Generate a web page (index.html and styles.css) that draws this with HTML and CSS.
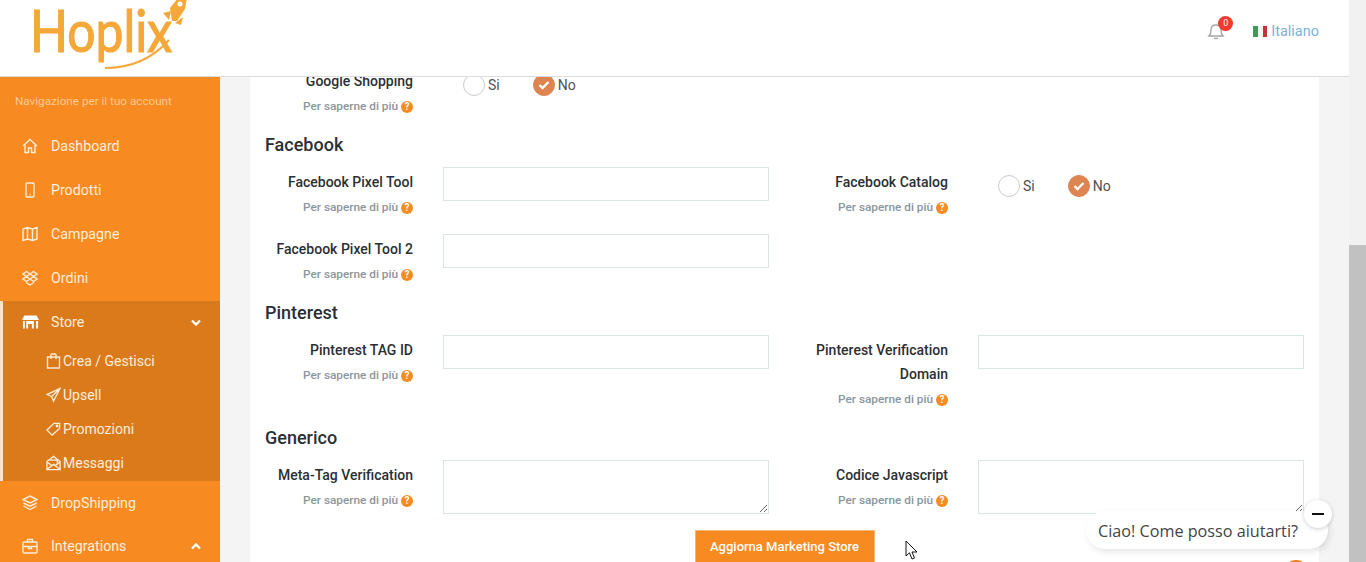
FILE: index.html
```html
<!DOCTYPE html>
<html lang="it">
<head>
  <meta charset="UTF-8">
  <meta name="viewport" content="width=device-width, initial-scale=1.0">
  <title>Hoplix - Marketing Store</title>
  <link rel="stylesheet" href="styles.css">
</head>
<body>
  <div class="page">
    <header class="topbar">
      <svg class="logo" width="158" height="76" viewBox="0 0 158 76">
        <text class="logo-text" x="-3" y="52" textLength="142" lengthAdjust="spacingAndGlyphs">Hoplix</text>
        <path d="M72 68 C98 68 120 58 136 40" fill="none" stroke="#f5a83a" stroke-width="2"/>
        <path d="M137 8 L145 -2 H154 L152 9 L144 21 L139 21 Z" fill="#f5a83a"/>
        <circle cx="147" cy="4" r="2.5" fill="#fff"/>
        <path d="M130 13 L138 11 L136 20 Z M142 23 L150 17 L148 25 Z" fill="#f5a83a"/>
      </svg>
      <div class="topbar-right">
        <div class="bell">
          <svg width="18" height="18" viewBox="0 0 18 18" fill="none" stroke="#a5a5a5" stroke-width="1.4">
            <path d="M2 14 Q4 12 4 8 Q4 3 9 3 Q14 3 14 8 Q14 12 16 14 Z"/>
            <path d="M7 16.5 H11"/>
          </svg>
          <span class="badge">0</span>
        </div>
        <div class="lang">
          <span class="flag"><i class="green"></i><i class="white"></i><i class="red"></i></span>
          Italiano
        </div>
      </div>
    </header>

    <div class="layout">
      <nav class="sidebar">
        <div class="nav-title">Navigazione per il tuo account</div>
        <a class="nav-item">
          <svg class="nav-icon" viewBox="0 0 16 16"><path d="M1 8 L8 1.5 L15 8 M3 7 V14.5 H6.5 V10 H9.5 V14.5 H13 V7"/></svg>
          Dashboard
        </a>
        <a class="nav-item">
          <svg class="nav-icon" viewBox="0 0 16 16"><rect x="4" y="1" width="8" height="14" rx="1"/><path d="M7.5 12.8 H8.5"/></svg>
          Prodotti
        </a>
        <a class="nav-item">
          <svg class="nav-icon" viewBox="0 0 16 16"><path d="M1 3 L5.5 1.5 L10.5 3 L15 1.5 V13 L10.5 14.5 L5.5 13 L1 14.5 Z M5.5 1.5 V13 M10.5 3 V14.5"/></svg>
          Campagne
        </a>
        <a class="nav-item">
          <svg class="nav-icon" viewBox="0 0 16 16"><path d="M4.5 1.5 L8 4 L11.5 1.5 L15 4 L11.5 6.5 L15 9 L11.5 11.5 L8 9 L4.5 11.5 L1 9 L4.5 6.5 L1 4 Z M4.5 6.5 L8 4 L11.5 6.5 L8 9 Z M4 12.5 L8 15 L12 12.5"/></svg>
          Ordini
        </a>
        <div class="nav-group">
          <a class="nav-item">
            <svg class="nav-icon solid" viewBox="0 0 18 16"><path d="M2.5 1 H15.5 L18 6 H0 Z M1 7 H3 V15 H1 Z M15 7 H17 V15 H15 Z M4.5 7 H12.5 V15 H10.5 V10 H6.5 V15 H4.5 Z"/></svg>
            Store
            <svg class="chevron" viewBox="0 0 10 7"><path d="M1 1.5 L5 5.5 L9 1.5"/></svg>
          </a>
          <a class="sub-item">
            <svg class="sub-icon" viewBox="0 0 14 16"><rect x="1" y="4" width="12" height="11"/><path d="M4.5 6 V2 Q4.5 1 5.5 1 H8.5 Q9.5 1 9.5 2 V6"/></svg>
            Crea / Gestisci
          </a>
          <a class="sub-item">
            <svg class="sub-icon" viewBox="0 0 16 16"><path d="M15 1 L1 7.5 L6 9.5 L8 14.5 Z M15 1 L6 9.5"/></svg>
            Upsell
          </a>
          <a class="sub-item">
            <svg class="sub-icon" viewBox="0 0 16 16"><path d="M1 9 L8.5 2 H14.5 V7.5 L6.5 14.5 Z"/><circle cx="11.8" cy="4.8" r="0.8"/></svg>
            Promozioni
          </a>
          <a class="sub-item">
            <svg class="sub-icon" viewBox="0 0 16 16"><path d="M1 6.5 L8 1 L15 6.5 V15 H1 Z M1 7 L6 10.5 M15 7 L10 10.5 M1.5 14.5 L8 9.5 L14.5 14.5 M4 5 H12 V9"/></svg>
            Messaggi
          </a>
        </div>
        <a class="nav-item">
          <svg class="nav-icon" viewBox="0 0 16 16"><path d="M8 1 L15 4.5 L8 8 L1 4.5 Z M1.5 8 L8 11.2 L14.5 8 M1.5 11 L8 14.5 L14.5 11"/></svg>
          DropShipping
        </a>
        <a class="nav-item">
          <svg class="nav-icon" viewBox="0 0 16 16"><rect x="1" y="4" width="14" height="11" rx="1"/><path d="M5.5 4 V1.5 H10.5 V4 M1 8.5 H15 M6.5 8.5 V10.5 H9.5 V8.5"/></svg>
          Integrations
          <svg class="chevron" viewBox="0 0 10 7"><path d="M1 5.5 L5 1.5 L9 5.5"/></svg>
        </a>
      </nav>

      <main class="main">
        <div class="card">
          <div class="row row-first">
            <div class="field">
              <div class="label">
                <div class="label-name">Google Shopping</div>
                <div class="label-help">Per saperne di più <span class="help">?</span></div>
              </div>
              <div class="radios">
                <span class="radio"><i class="circle"></i>Si</span>
                <span class="radio"><i class="circle checked"><svg viewBox="0 0 12 10"><path d="M1.5 5 L4.5 8 L10.5 2"/></svg></i>No</span>
              </div>
            </div>
          </div>

          <h3 class="section-title">Facebook</h3>
          <div class="row">
            <div class="field">
              <div class="label">
                <div class="label-name">Facebook Pixel Tool</div>
                <div class="label-help">Per saperne di più <span class="help">?</span></div>
              </div>
              <input class="text-input" type="text">
            </div>
            <div class="field">
              <div class="label">
                <div class="label-name">Facebook Catalog</div>
                <div class="label-help">Per saperne di più <span class="help">?</span></div>
              </div>
              <div class="radios">
                <span class="radio"><i class="circle"></i>Si</span>
                <span class="radio"><i class="circle checked"><svg viewBox="0 0 12 10"><path d="M1.5 5 L4.5 8 L10.5 2"/></svg></i>No</span>
              </div>
            </div>
          </div>
          <div class="row">
            <div class="field">
              <div class="label">
                <div class="label-name">Facebook Pixel Tool 2</div>
                <div class="label-help">Per saperne di più <span class="help">?</span></div>
              </div>
              <input class="text-input" type="text">
            </div>
          </div>

          <h3 class="section-title">Pinterest</h3>
          <div class="row">
            <div class="field">
              <div class="label">
                <div class="label-name">Pinterest TAG ID</div>
                <div class="label-help">Per saperne di più <span class="help">?</span></div>
              </div>
              <input class="text-input" type="text">
            </div>
            <div class="field">
              <div class="label">
                <div class="label-name">Pinterest Verification Domain</div>
                <div class="label-help">Per saperne di più <span class="help">?</span></div>
              </div>
              <input class="text-input" type="text">
            </div>
          </div>

          <h3 class="section-title">Generico</h3>
          <div class="row">
            <div class="field">
              <div class="label">
                <div class="label-name">Meta-Tag Verification</div>
                <div class="label-help">Per saperne di più <span class="help">?</span></div>
              </div>
              <textarea class="text-area"></textarea>
            </div>
            <div class="field">
              <div class="label">
                <div class="label-name">Codice Javascript</div>
                <div class="label-help">Per saperne di più <span class="help">?</span></div>
              </div>
              <textarea class="text-area"></textarea>
            </div>
          </div>

          <div class="actions">
            <button class="submit" type="button">Aggiorna Marketing Store</button>
          </div>
        </div>
      </main>
    </div>
  </div>

  <div class="scrollbar"><div class="scroll-thumb"></div></div>

  <svg class="cursor" width="14" height="21" viewBox="0 0 14 21">
    <path d="M1 1 V16 L4.5 12.8 L7 19 L9.5 18 L7 12 H12 Z" fill="#fff" stroke="#111" stroke-width="1"/>
  </svg>

  <div class="chat">
    <div class="chat-bubble">Ciao! Come posso aiutarti?</div>
    <div class="chat-close"><span></span></div>
    <div class="chat-launcher"></div>
  </div>
</body>
</html>
```

FILE: styles.css
```css
:root {
  --orange: #f78a20;
  --orange-dark: #db7a1a;
  --text: #2b2f33;
  --muted: #8a969c;
  --line: #dbe5e6;
}

html, body {
  height: 100%;
}

body {
  margin: 0;
  display: flex;
  overflow: hidden;
  font-family: Roboto, "Noto Sans", sans-serif;
  font-size: 14px;
  color: var(--text);
  background: #f4f4f4;
}

.page {
  flex: 1;
  min-width: 0;
  display: flex;
  flex-direction: column;
}

.topbar {
  height: 76px;
  flex: none;
  display: flex;
  justify-content: space-between;
  align-items: center;
  background: #fff;
  border-bottom: 1px solid #dcdcdc;
}

.logo {
  margin-left: 33px;
  overflow: hidden;
}

.logo-text {
  font-family: Lato, sans-serif;
  font-size: 58px;
  fill: #f5a83a;
  stroke: #f5a83a;
  stroke-width: 1.2;
}

.topbar-right {
  display: flex;
  align-items: center;
  gap: 28px;
  margin-right: 30px;
  margin-top: -14px;
}

.bell {
  position: relative;
  display: flex;
}

.badge {
  position: absolute;
  top: -6px;
  left: 11px;
  width: 15px;
  height: 15px;
  border-radius: 50%;
  background: #f4392f;
  color: #fff;
  font-size: 9px;
  line-height: 15px;
  text-align: center;
}

.lang {
  display: flex;
  align-items: center;
  gap: 4px;
  font-size: 14.5px;
  color: #7eb1d8;
}

.flag {
  display: flex;
  width: 14px;
  height: 11px;
}

.flag i {
  flex: 1;
}

.flag .green { background: #3d9a5c; }
.flag .white { background: #f1f1f1; }
.flag .red { background: #c2343c; }

.layout {
  flex: 1;
  min-height: 0;
  display: flex;
  overflow: hidden;
}

.sidebar {
  width: 220px;
  flex: none;
  background: var(--orange);
  color: #fff;
}

.nav-title {
  height: 47px;
  padding-left: 15px;
  line-height: 48px;
  font-size: 11.7px;
  color: #fdc992;
}

.nav-item {
  height: 44px;
  display: flex;
  align-items: center;
  gap: 13px;
  padding: 0 19px 0 22px;
  color: #ffeeda;
  font-size: 14.2px;
}

.nav-icon {
  width: 16px;
  height: 16px;
  flex: none;
  fill: none;
  stroke: #ffeeda;
  stroke-width: 1.4;
}

.nav-icon.solid {
  width: 17px;
  fill: #fff;
  stroke: none;
  margin-right: -1px;
}

.chevron {
  width: 10px;
  height: 7px;
  margin-left: auto;
  fill: none;
  stroke: #fff;
  stroke-width: 2.4;
}

.nav-group {
  margin-top: 1px;
  background: var(--orange-dark);
  border-left: 3px solid #fde3c8;
  padding-bottom: 1px;
}

.nav-group .nav-item {
  padding-left: 19px;
  padding-right: 19px;
  height: 42px;
  padding-bottom: 1px;
}

.nav-group + .nav-item {
  height: 43px;
}

.sub-item {
  height: 34px;
  display: flex;
  align-items: center;
  gap: 2px;
  padding-left: 43px;
  color: #ffeeda;
}

.sub-icon {
  width: 15px;
  height: 16px;
  flex: none;
  fill: none;
  stroke: #ffeeda;
  stroke-width: 1.4;
}

.main {
  flex: 1;
  min-width: 0;
  padding: 0 30px;
}

.card {
  display: flow-root;
  background: #fff;
  padding: 0 15px;
  height: 100%;
  overflow: hidden;
}

.row {
  display: flex;
  gap: 31px;
  margin-bottom: 16px;
}

.row-first {
  margin-top: -11px;
}

.field {
  width: 504px;
  display: flex;
  align-items: flex-start;
  gap: 30px;
}

.label {
  width: 148px;
  flex: none;
  padding-top: 3px;
  text-align: right;
}

.label-name {
  line-height: 24px;
  font-weight: 500;
  color: var(--text);
}

.label-help {
  margin: 1px 0 -1px;
  line-height: 24px;
  font-size: 11.8px;
  font-weight: 500;
  color: var(--muted);
}

.help {
  display: inline-block;
  width: 12px;
  height: 12px;
  border-radius: 50%;
  background: var(--orange);
  color: #fff;
  font-size: 10px;
  font-weight: 700;
  line-height: 12px;
  text-align: center;
}

.section-title {
  margin: 0 0 10px;
  font-size: 18px;
  font-weight: 500;
  line-height: 24px;
  color: var(--text);
}

.text-input,
.text-area {
  width: 326px;
  box-sizing: border-box;
  margin: 0;
  border: 1px solid var(--line);
  background: #fff;
  display: block;
}

.text-input {
  height: 34px;
}

.text-area {
  height: 54px;
}

.radios {
  display: flex;
  gap: 33px;
  padding: 8px 0 0 20px;
}

.radio {
  display: flex;
  align-items: center;
  gap: 3px;
  line-height: 22px;
  color: #4a5257;
}

.circle {
  width: 22px;
  height: 22px;
  box-sizing: border-box;
  border: 1px solid #ccc;
  border-radius: 50%;
  display: flex;
  align-items: center;
  justify-content: center;
}

.circle.checked {
  background: #dd8450;
  border-color: #dd8450;
}

.circle svg {
  width: 12px;
  height: 10px;
  fill: none;
  stroke: #fff;
  stroke-width: 2.4;
}

.actions {
  display: flex;
  justify-content: center;
}

.submit {
  width: 180px;
  height: 32px;
  padding: 0;
  border: 1px solid #f3b67c;
  border-bottom: 0;
  background: var(--orange);
  color: #fff;
  font-family: inherit;
  font-size: 13px;
  font-weight: 500;
}

.scrollbar {
  width: 17px;
  flex: none;
  background: #f1f1f1;
  display: flex;
  flex-direction: column;
  justify-content: flex-end;
}

.scroll-thumb {
  height: 317px;
  background: #c1c1c1;
}

.cursor {
  position: absolute;
  left: 905px;
  top: 540px;
}

.chat {
  position: absolute;
  left: 1086px;
  top: 511px;
  width: 242px;
  height: 38px;
}

.chat-bubble {
  height: 38px;
  padding-left: 12px;
  border-radius: 19px;
  background: #fff;
  box-shadow: 2px 3px 6px rgba(0,0,0,0.1);
  font-family: "Open Sans", sans-serif;
  font-size: 16.2px;
  line-height: 40px;
  color: #444;
}

.chat-close {
  position: absolute;
  left: 218px;
  top: -11px;
  width: 28px;
  height: 28px;
  border-radius: 50%;
  background: #fff;
  box-shadow: 0 1px 4px rgba(0,0,0,0.2);
  display: flex;
  align-items: center;
  justify-content: center;
}

.chat-close span {
  width: 12px;
  height: 2px;
  background: #111;
}

.chat-launcher {
  position: absolute;
  left: 197px;
  top: 49px;
  width: 26px;
  height: 26px;
  border-radius: 50%;
  background: #f47b20;
}
```
